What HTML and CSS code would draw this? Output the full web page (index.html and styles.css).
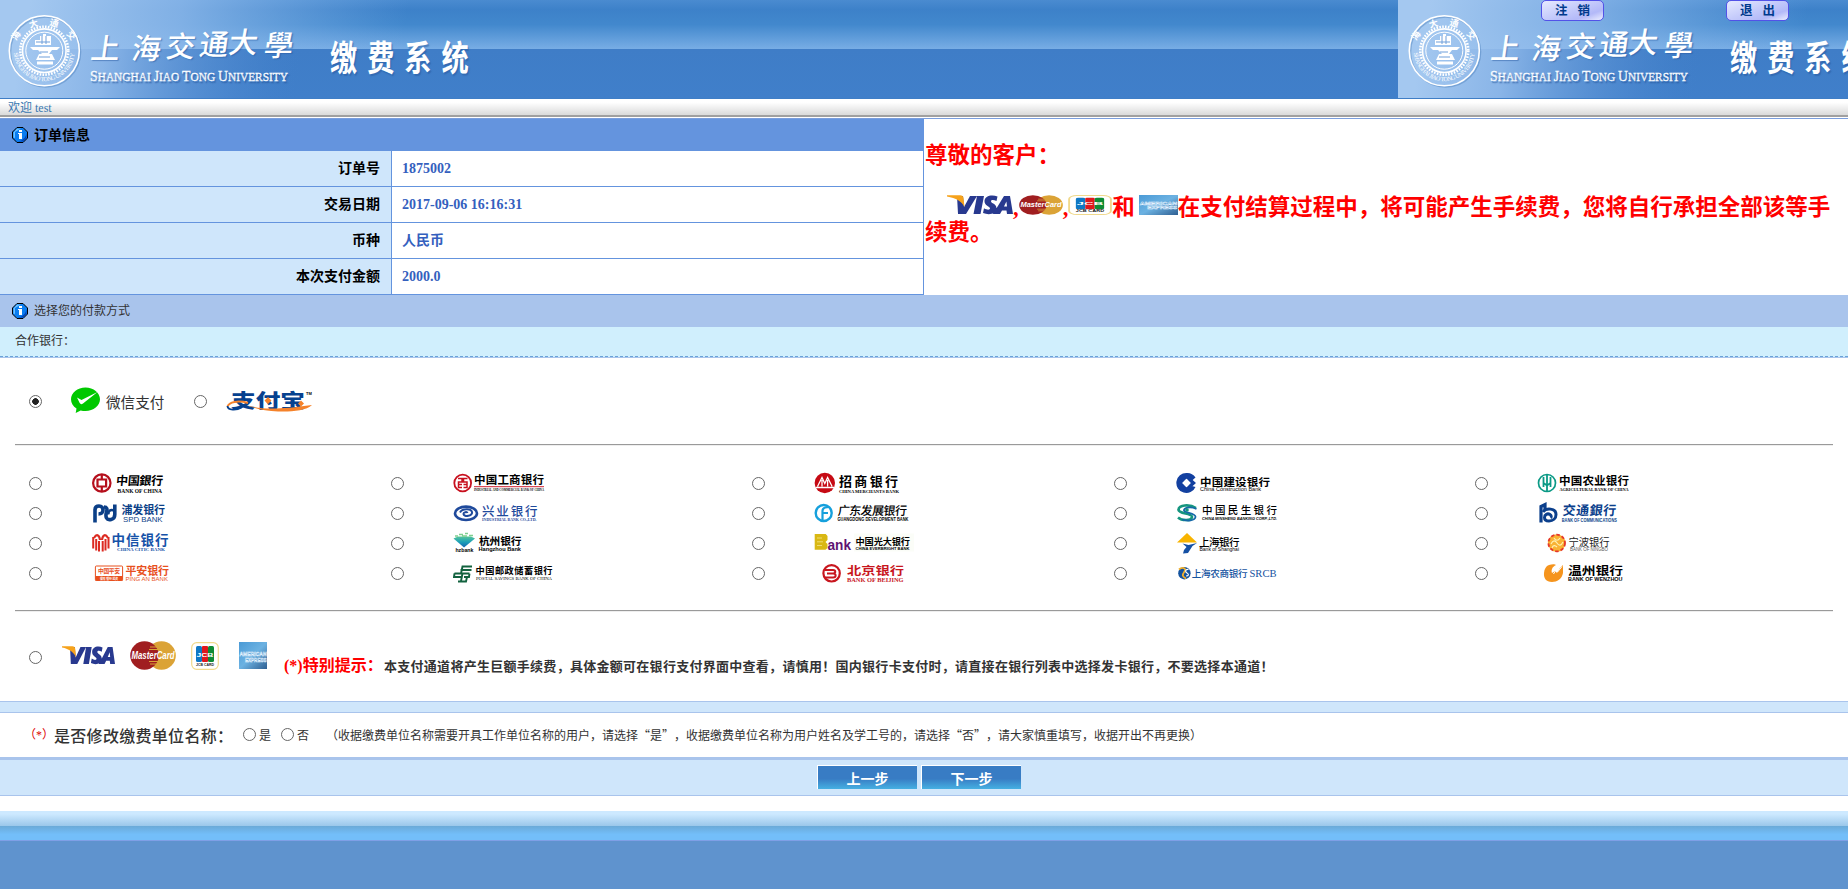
FILE: index.html
```html
<!DOCTYPE html>
<html lang="zh-CN">
<head>
<meta charset="utf-8">
<title>缴费系统</title>
<link rel="stylesheet" href="styles.css">
</head>
<body>
<svg class="defs" width="0" height="0" aria-hidden="true">
  <defs>
    <linearGradient id="gTop" x1="0" y1="0" x2="0" y2="1">
      <stop offset="0" stop-color="#4a8bd0"/><stop offset=".2" stop-color="#3d81c9"/><stop offset=".5" stop-color="#4288cd"/><stop offset="1" stop-color="#78ade5"/>
    </linearGradient>
    <linearGradient id="gLow" x1="0" y1="0" x2="0" y2="1">
      <stop offset="0" stop-color="#3f7dc7"/><stop offset="1" stop-color="#407fca"/>
    </linearGradient>
    <linearGradient id="gLeft" gradientUnits="userSpaceOnUse" x1="30" y1="0" x2="400" y2="60">
      <stop offset="0" stop-color="#a4c8f0"/><stop offset=".4" stop-color="#8cb8ea" stop-opacity=".85"/><stop offset="1" stop-color="#78ade5" stop-opacity="0"/>
    </linearGradient>
    <linearGradient id="gLeftLow" gradientUnits="userSpaceOnUse" x1="20" y1="40" x2="300" y2="70">
      <stop offset="0" stop-color="#a4c8f0"/><stop offset=".3" stop-color="#92bbeb" stop-opacity=".9"/><stop offset="1" stop-color="#4583cd" stop-opacity="0"/>
    </linearGradient>
    <linearGradient id="gBlue" x1="0" y1="0" x2="1" y2="1">
      <stop offset="0" stop-color="#4a9ad6"/><stop offset=".5" stop-color="#6cb2e2"/><stop offset="1" stop-color="#2f5f92"/>
    </linearGradient>
    <linearGradient id="gHz" x1="0" y1="0" x2="0" y2="1">
      <stop offset="0" stop-color="#57c59a"/><stop offset=".5" stop-color="#1ba0b8"/><stop offset="1" stop-color="#1565b0"/>
    </linearGradient>

    <symbol id="banner" viewBox="0 0 1398 98">
      <rect width="1398" height="49" fill="url(#gTop)"/>
      <rect y="49" width="1398" height="49" fill="url(#gLow)"/>
      <rect width="420" height="49" fill="url(#gLeft)"/>
      <rect y="49" width="320" height="49" fill="url(#gLeftLow)"/>
      <circle cx="45.500" cy="52" r="35" fill="none" stroke="#3a6fae" stroke-width="1.600" opacity=".35"/>
      <circle cx="44.300" cy="50.700" r="35" fill="none" stroke="#fff" stroke-width="1.600"/>
      <circle cx="44.300" cy="50.700" r="24" fill="none" stroke="#fff" stroke-width="2.600" stroke-dasharray="1.600 1.300"/>
      <circle cx="44.300" cy="50.700" r="21.800" fill="none" stroke="#fff" stroke-width="1.600"/>
      <circle cx="44.300" cy="50.700" r="18.500" fill="none" stroke="#fff" stroke-width="1"/>
      <path fill="#fff" d="M35 40h5v-4h3v-2h3v2h5v9h-16zM30 47h30l-3 3h-5l-3 4h3l3 6H36l3-6h3l-4-4h-5zM37 61.500h16v3H37z"/>
      <path stroke="#6e9fda" stroke-width="1" fill="none" d="M36 42h14M42 36v8M46 36v8M40 52h8M39 57h11"/>
      <path id="arcLow" d="M13.800 50.700a30.500 30.500 0 0 0 61 0" fill="none"/>
      <text class="roman" font-size="6.200" fill="#fff"><textPath href="#arcLow" textLength="91" startOffset="2">SHANGHAI JIAO TONG UNIVERSITY</textPath></text>
      <g class="cn" font-size="9" fill="#fff">
        <text transform="translate(16 41) rotate(-55)">海</text><text transform="translate(30 28) rotate(-15)">大</text><text transform="translate(49 25) rotate(15)">通</text><text transform="translate(66 34) rotate(50)">交</text>
      </g>
      <text class="brush shade" x="98 139 173 206 235 271" y="59 59 57 55 53 56" font-size="29" fill="#fff" transform="skewX(-8)">上海交通大學</text>
      <text class="roman shade" x="90" y="81" fill="#fff" stroke="#fff" stroke-width=".3" textLength="198" lengthAdjust="spacingAndGlyphs"><tspan font-size="14.500">S</tspan><tspan font-size="12">HANGHAI </tspan><tspan font-size="14.500">J</tspan><tspan font-size="12">IAO </tspan><tspan font-size="14.500">T</tspan><tspan font-size="12">ONG </tspan><tspan font-size="14.500">U</tspan><tspan font-size="12">NIVERSITY</tspan></text>
      <text class="sys shade" transform="translate(330 71) scale(.8 1.05)" font-size="34" letter-spacing="12.500" fill="#fff">缴费系统</text>
    </symbol>

    <symbol id="info" viewBox="0 0 16 16">
      <path d="M5 .5h6L15.500 5v6L11 15.500H5L.500 11V5z" fill="#0a7df0" stroke="#000"/>
      <path d="M5 1.500h4L3 5v6L1.500 10.500v-5z" fill="#6ec4ff"/>
      <path d="M14.500 6v5L11 14.500H6c5-1 8-4 8.500-8.500z" fill="#0443b8"/>
      <path d="M7 3h3v2H7zM6 6h4v6H7V7H6z" fill="#fff"/>
    </symbol>

    <symbol id="visa" viewBox="0 0 66 20" preserveAspectRatio="none">
      <path fill="#28398f" d="M10 1h6l1 11 6-11h7L19 19h-8zM30 1h7l-3.500 18h-7zM53 19h-7L57 1h6l3 18h-6l-.5-3.500h-4.500zM57 11.500h3l-.6-5zM50.500 1.500l-1 4.500c-3-1.500-5.500-1.300-5.500.2 0 2.300 5.500 2.300 5.500 7 0 5.800-7.500 7.300-13.500 4.800l1-4.800c3 2 6 1.800 6 .3 0-2.300-5.500-2.500-5.500-7.200C37.500 1 44.500-.8 50.500 1.500z"/>
      <path fill="#f6a21b" d="M0 .300h13c2 0 3.500 1 3.500 3L17.500 12C15 6.500 9 3 0 1.500z"/>
    </symbol>
    <symbol id="mc" viewBox="0 0 46 29" preserveAspectRatio="none">
      <ellipse cx="31.500" cy="14.500" rx="14.300" ry="14.300" fill="#dba336"/>
      <ellipse cx="14.500" cy="14.500" rx="14.300" ry="14.300" fill="#a01e20"/>
      <path stroke="#dba336" stroke-width="1.200" d="M20 6h7M19 8.500h9M19 20.500h9M20 23h7"/>
      <text class="sans" x="1.500" y="18" font-size="10" font-style="italic" font-weight="700" fill="#fff" textLength="43" lengthAdjust="spacingAndGlyphs">MasterCard</text>
    </symbol>
    <symbol id="jcb" viewBox="0 0 28 28" preserveAspectRatio="none">
      <rect x=".700" y=".700" width="26.600" height="26.600" rx="5" fill="#fff" stroke="#f0d98c" stroke-width="1.200"/>
      <rect x="5" y="4" width="6" height="16" rx="1.500" fill="#0f78c4"/><rect x="11" y="4" width="6" height="16" rx="1" fill="#e0161c"/><rect x="17" y="4" width="6" height="16" rx="1.500" fill="#0d8b34"/>
      <text class="sans" x="5.500" y="14.500" font-size="6" font-weight="700" fill="#fff" textLength="17" lengthAdjust="spacingAndGlyphs">JCB</text>
      <text class="sans" x="5" y="24" font-size="4" font-weight="700" fill="#222" textLength="18" lengthAdjust="spacingAndGlyphs">JCB CARD</text>
    </symbol>
    <symbol id="amex" viewBox="0 0 28 27" preserveAspectRatio="none">
      <rect width="28" height="27" fill="url(#gBlue)"/>
      <g class="sans" font-size="5.500" font-weight="700" fill="#3d86c0" stroke="#e4f3ff" stroke-width=".500">
        <text x=".500" y="14" textLength="27" lengthAdjust="spacingAndGlyphs">AMERICAN</text>
        <text x="6" y="19.500" textLength="21.500" lengthAdjust="spacingAndGlyphs">EXPRESS</text>
      </g>
    </symbol>
  </defs>
</svg>

<header class="top">
  <svg class="banner" width="1398" height="98"><use href="#banner"/></svg>
  <svg class="banner next" width="1398" height="98"><use href="#banner"/></svg>
  <button class="pill logout">注 销</button>
  <button class="pill quit">退 出</button>
</header>
<div class="welcome">欢迎 test</div>

<section class="order">
  <div class="order-info">
    <h2><svg width="16" height="16"><use href="#info"/></svg><span>订单信息</span></h2>
    <dl>
      <dt>订单号</dt><dd>1875002</dd>
      <dt>交易日期</dt><dd>2017-09-06 16:16:31</dd>
      <dt>币种</dt><dd>人民币</dd>
      <dt>本次支付金额</dt><dd>2000.0</dd>
    </dl>
  </div>
  <div class="notice">
    <p>尊敬的客户：</p>
    <p class="body"><svg width="66" height="20"><use href="#visa"/></svg>,<svg width="44" height="20"><use href="#mc"/></svg>,<svg width="44" height="20"><use href="#jcb"/></svg>和<svg class="amex" width="39" height="20"><use href="#amex"/></svg>在支付结算过程中，将可能产生手续费，您将自行承担全部该等手续费。</p>
  </div>
</section>

<div class="bar"><svg width="16" height="16"><use href="#info"/></svg>选择您的付款方式</div>
<div class="partner">合作银行：</div>

<main>
  <div class="wallets">
    <input type="radio" name="pay" checked>
    <svg class="wechat" width="96" height="28" viewBox="0 0 96 28">
      <path fill="#00c800" d="M14.500.5C6.500.5 0 5.700 0 12.300c0 3.900 2.100 7.200 5.500 9.300L4.700 26l5-2.600c1.500.4 3.100.6 4.800.6 8 0 14.500-5.200 14.500-11.700S22.500.5 14.500.5z"/>
      <path fill="#fff" d="M6 10.500l4.500 2.500L26.500 5 12 16.500c-1.500 1-2.600.8-3.300-.5z"/>
      <text class="cn thin" x="35" y="21" font-size="14.600" fill="#333">微信支付</text>
    </svg>
    <input type="radio" name="pay">
    <svg class="alipay" width="88" height="28" viewBox="0 -3 88 28">
      <text class="cn heavy" x="5" y="17" font-size="19" fill="#06418f" textLength="74" lengthAdjust="spacingAndGlyphs">支付宝</text>
      <path fill="none" stroke="#f5822a" stroke-width="2" d="M22 12C12 9 3 11 1.500 15.500"/>
      <path fill="none" stroke="#06418f" stroke-width="1.800" d="M1.500 15c0 4.500 9 4.500 14 1.500"/>
      <path fill="#f5822a" d="M18 13c12 5 30 6.500 68 1-6 6-22 7-34 6.500-14-.5-24-3-34-7.500zM42 6l3.500 3.500L42 13l-3.500-3.500zM75 9.500l3 3-3 3-3-3z"/>
      <text class="sans" x="80" y="3.500" font-size="4" font-weight="700">TM</text>
    </svg>
  </div>
  <hr>
  <div class="banks">
    <label><input type="radio" name="pay"><svg width="110" height="24">
      <circle cx="10.800" cy="12" r="8.700" fill="none" stroke="#b50f1c" stroke-width="2.200"/><path d="M10.800 3v5M10.800 16v5M6.500 8.500h8.600v7H6.500z" fill="none" stroke="#b50f1c" stroke-width="2.200"/>
      <text class="brush bold" x="25" y="14" font-size="12" textLength="47" transform="skewX(-5) translate(1 0)">中国銀行</text><text class="en" x="26.500" y="21.800" textLength="44.500" lengthAdjust="spacingAndGlyphs">BANK OF CHINA</text></svg></label>
    <label><input type="radio" name="pay"><svg width="110" height="24">
      <circle cx="9.700" cy="12" r="8.400" fill="none" stroke="#c8101e" stroke-width="1.800"/><path d="M5 7.500h4v3.500H5.500v5.500H9M14.500 7.500h-4v3.500h3.500v5.500h-3.500M5 13.500h4M10.500 13.500h4" fill="none" stroke="#c8101e" stroke-width="1.500"/>
      <text class="cn" x="21" y="13" font-size="11.500" textLength="70">中国工商银行</text><path d="M21 15.700h70" stroke="#d02030"/><text class="en" x="21" y="20.300" font-size="4" textLength="70" lengthAdjust="spacingAndGlyphs">INDUSTRIAL AND COMMERCIAL BANK OF CHINA</text></svg></label>
    <label><input type="radio" name="pay"><svg width="110" height="24">
      <circle cx="10.800" cy="12" r="10.200" fill="#c60a14"/><path d="M3.500 15.500l4.500-9 2.800 6 2.800-6 4.500 9M8 15.500V9M13.600 15.500V9M1.500 16.500h18.500" fill="none" stroke="#fff" stroke-width="1.300"/>
      <text class="cn" x="25" y="15" font-size="13" textLength="59">招商银行</text><text class="en" x="25" y="21.500" font-size="5" textLength="60" lengthAdjust="spacingAndGlyphs">CHINA MERCHANTS BANK</text></svg></label>
    <label><input type="radio" name="pay"><svg width="110" height="24">
      <path fill="#1340a0" d="M10.500 2a10 10 0 1 0 9 14l-3.500-1-5.500 4L3.500 12l7-6.500 5 4.500 4-3.500A10 10 0 0 0 10.500 2z"/><path fill="#1340a0" fill-rule="evenodd" d="M10.500 3.500L20 12l-9.500 8.500L2.500 12zM10.500 7.800L6.300 12l4.200 4.200 4.200-4.200z"/><path fill="#fff" d="M10.500 7.800l4.200 4.200-4.200 4.200L6.300 12z"/>
      <text class="cn" x="24" y="14.500" font-size="11.500" textLength="70" transform="translate(0 2) scale(1 .88)">中国建设银行</text><text class="en sans reg" x="24" y="19.500" font-size="4.800" textLength="61" lengthAdjust="spacingAndGlyphs">China Construction Bank</text></svg></label>
    <label><input type="radio" name="pay"><svg width="110" height="24">
      <circle cx="10" cy="12" r="8.500" fill="none" stroke="#0b9a86" stroke-width="1.700"/><path d="M10 3.500v17M6.500 6v6l3.500 2.500 3.500-2.500V6M6.500 10v6M13.500 10v6" fill="none" stroke="#0b9a86" stroke-width="1.800"/>
      <text class="cn" x="22" y="13.500" font-size="11.500" textLength="70">中国农业银行</text><text class="en" x="22.500" y="20" font-size="4.800" textLength="69" lengthAdjust="spacingAndGlyphs">AGRICULTURAL BANK OF CHINA</text></svg></label>

    <label><input type="radio" name="pay"><svg width="110" height="24" fill="#0b3f87">
      <path fill="none" stroke="#0b3f87" stroke-width="3.600" d="M4 21.500V9c0-3 1.500-4 4-4 2.800 0 4 1.700 4 4 0 2.600-1.500 4-4.500 4"/><path fill="none" stroke="#0b3f87" stroke-width="3.600" d="M13 6c3 0 3.500 2 2.500 5-.8 2.800-1 4 0 6 1.300 2.500 8.300 2.500 8.300-3.500V3.500"/><path fill="none" stroke="#0b3f87" stroke-width="2.500" d="M23 9.500c-4-1.500-6 1-5.500 4"/>
      <text class="cn" x="30.500" y="13" font-size="11" textLength="43.500">浦发银行</text><text class="en sans reg" x="32" y="21.300" font-size="7.800" textLength="39.500" lengthAdjust="spacingAndGlyphs">SPD BANK</text></svg></label>
    <label><input type="radio" name="pay"><svg width="110" height="24" fill="#1f4a9c">
      <ellipse cx="13" cy="12.300" rx="11" ry="6.700" fill="none" stroke="#1f4a9c" stroke-width="2.600"/><path d="M7 11.500c2-4 11-4.500 12-.5 1 4-8 5.500-8.500 2-.2-2 3.500-2.500 4-1" fill="none" stroke="#1f4a9c" stroke-width="2"/>
      <text class="brush" x="29" y="14.500" font-size="12.500" textLength="55.500">兴业银行</text><text class="en" x="29" y="20.300" font-size="4.800" textLength="54.500" lengthAdjust="spacingAndGlyphs">INDUSTRIAL BANK CO.,LTD.</text></svg></label>
    <label><input type="radio" name="pay"><svg width="110" height="24">
      <circle cx="9.700" cy="12" r="8" fill="none" stroke="#16a0dc" stroke-width="2.400"/><path d="M8.500 21V10c0-3 2-4 6.500-4M8.500 12H14" fill="none" stroke="#16a0dc" stroke-width="2.200"/>
      <text class="brush" x="23.500" y="14.500" font-size="12" textLength="69" transform="skewX(-6) translate(1.500 0)">广东发展银行</text><text class="en sans" x="23.500" y="19.900" font-size="4.600" textLength="71" lengthAdjust="spacingAndGlyphs">GUANGDONG DEVELOPMENT BANK</text></svg></label>
    <label><input type="radio" name="pay"><svg width="110" height="24">
      <path d="M20 7C14 3 2 3.500 2.500 9c.5 4 14 3 13.500 7-.5 4-10 4-14 .5" fill="none" stroke="#16967f" stroke-width="2.600"/><path d="M20.500 8C14 5 7.500 7 8 9.500c.5 2.500 12 2.500 11.500 6.500-.5 3.500-8 4.500-13.500 2.500" fill="none" stroke="#1569a8" stroke-width="1.800"/><circle cx="11" cy="9" r="1.800" fill="#16967f"/>
      <text class="brush" x="26" y="13.300" font-size="10.500" textLength="75">中国民生银行</text><text class="en sans" x="26" y="19.200" font-size="4.200" font-style="italic" textLength="75" lengthAdjust="spacingAndGlyphs">CHINA MINSHENG BANKING CORP.,LTD.</text></svg></label>
    <label><input type="radio" name="pay"><svg width="110" height="24">
      <path fill="none" stroke="#0b3f8c" stroke-width="3.200" d="M4 21.500V5.500l4-2V9"/><path fill="none" stroke="#0b3f8c" stroke-width="3" d="M6 11c3-4.500 13-4 13 2.500 0 4-3 6.500-7 6.500-3 0-4.500-1.500-4.500-3.500 0-3 3-4.500 5.500-3 1.500 1 1.500 2.500.5 3.200"/>
      <text class="brush bold" fill="#0b3f8c" x="25.500" y="13.800" font-size="13" textLength="53.500" transform="skewX(-5) translate(1 0)">交通銀行</text><text class="en sans" fill="#0b3f8c" x="24.800" y="21.300" font-size="4.500" textLength="55" lengthAdjust="spacingAndGlyphs">BANK OF COMMUNICATIONS</text></svg></label>

    <label><input type="radio" name="pay"><svg width="110" height="24">
      <path d="M2.200 6v11.500M5.200 8v11.500M8 10v10.500M11.700 10v10.500M14.500 8v11.500M17.500 6v11.500" stroke="#dc2b22" stroke-width="2" fill="none"/><path d="M3 7C6 2 8.500 4.500 9 9M17 7c-3-5-5.500-2.500-6 2" stroke="#dc2b22" stroke-width="2.200" fill="none"/>
      <text class="brush bold" x="20.500" y="13.500" font-size="13.500" fill="#1552a8" textLength="57">中信银行</text><text class="en" x="26" y="20.300" font-size="5" fill="#1552a8" textLength="48" lengthAdjust="spacingAndGlyphs">CHINA CITIC BANK</text></svg></label>
    <label><input type="radio" name="pay"><svg width="110" height="24">
      <path fill="url(#gHz)" d="M.5 7.500L5 5.500h13l4 2-11 9z"/><path d="M2 5h3M6 3.500h4M12 2.500h3M16 4.500h4M9 5h5" stroke="#7fcf8f" stroke-width="1.400"/>
      <text class="en sans" x="2.400" y="21.300" font-size="5" textLength="18" lengthAdjust="spacingAndGlyphs">hzbank</text><text class="cn" x="26" y="14" font-size="10.700" textLength="42.500">杭州银行</text><text class="en sans" x="25.500" y="20" font-size="5" textLength="42.500" lengthAdjust="spacingAndGlyphs">Hangzhou Bank</text></svg></label>
    <label><input type="radio" name="pay"><svg width="110" height="24">
      <rect x="40" y="2.500" width="60" height="18" fill="#fbfdf8"/><path fill="#d9b814" d="M.7 3h11l1.800 2v4L11.500 11l2 2v4L11.500 18.700H.7z"/><path d="M3 7h5M3 14.500h5M3 10.800h6" stroke="#f0dc70" stroke-width="1"/>
      <text class="sans" x="13.500" y="18.500" font-size="14.500" font-weight="700" fill="#5e1472" textLength="23.500" lengthAdjust="spacingAndGlyphs">ank</text><text class="cn" x="41.500" y="13.500" font-size="9.200" textLength="54.500">中国光大银行</text><text class="en sans" x="41.500" y="19.200" font-size="4.300" textLength="54" lengthAdjust="spacingAndGlyphs">CHINA EVERBRIGHT BANK</text></svg></label>
    <label><input type="radio" name="pay"><svg width="110" height="24">
      <path fill="#f8b400" d="M11 2l10 9.500H1z"/><path fill="#1550a4" d="M6.500 12.500l6 1.500 8.500-2-4.500 3-4.500 7-5 .5 1-3.500 2.500-3z"/>
      <text class="cn semi" x="23" y="14.500" font-size="10.500" textLength="40.500">上海银行</text><text class="en sans reg" x="23.500" y="19.700" font-size="5" textLength="39.500" lengthAdjust="spacingAndGlyphs">Bank of Shanghai</text></svg></label>
    <label><input type="radio" name="pay"><svg width="110" height="24">
      <circle cx="19.700" cy="12" r="8.800" fill="#f9b233"/><circle cx="19.700" cy="12" r="8.300" fill="none" stroke="#e5372b" stroke-width="1.800" stroke-dasharray="3.500 2"/><path d="M14 13c2-4 4-4 6-1s4 3 6-1M15 17c1-3 3-3 5-1M17 7c2 3 4 3 6 0" fill="none" stroke="#fff0b0" stroke-width="1.200"/>
      <text class="cn thin" x="31.500" y="14.500" font-size="10.300" fill="#222" textLength="41">宁波银行</text><text class="en sans reg" x="33" y="19.500" font-size="4.600" fill="#555" textLength="38" lengthAdjust="spacingAndGlyphs">BANK OF NINGBO</text></svg></label>

    <label><input type="radio" name="pay"><svg width="110" height="24" fill="#e8501e">
      <rect x="4.400" y="5" width="27.200" height="14.500" rx="1" fill="#fff" stroke="#e8501e"/><rect x="4.400" y="15" width="27.200" height="4.800"/><text class="cn" x="7" y="12.300" font-size="5.800" textLength="22">中国平安</text><text class="cn" x="9" y="18.700" font-size="3.400" fill="#fff" textLength="18" lengthAdjust="spacingAndGlyphs">保险 银行 投资</text>
      <text class="cn" x="34.500" y="13.700" font-size="11" textLength="43.500">平安银行</text><text class="en sans reg" x="34.500" y="19.900" font-size="6" textLength="42.500" lengthAdjust="spacingAndGlyphs">PING AN BANK</text></svg></label>
    <label><input type="radio" name="pay"><svg width="110" height="24">
      <path d="M19 5.500H9.500L8 12.500M18.500 9h-11M1.500 12.500h15M1.500 12.500L1 16h8M16.500 12.500L16 16h-5M5 20.500h8L14 16M9.500 12.500L8 20" stroke="#12623f" stroke-width="1.900" fill="none"/>
      <text class="brush bold" x="22.500" y="13" font-size="9.200" textLength="77">中国邮政储蓄银行</text><text class="en reg" x="23" y="19.300" font-size="4.300" textLength="76" lengthAdjust="spacingAndGlyphs">POSTAL SAVINGS BANK OF CHINA</text></svg></label>
    <label><input type="radio" name="pay"><svg width="110" height="24" fill="#c8161e">
      <circle cx="17.600" cy="12.300" r="8.200" fill="none" stroke="#c8161e" stroke-width="2.200"/><path d="M11 9h8c3 0 3 3.500 0 3.500h-4.500M13 12.500h6c3.500 0 3.500 4 0 4h-8" fill="none" stroke="#c8161e" stroke-width="2"/>
      <text class="cn" x="33" y="14" font-size="11.500" textLength="57" lengthAdjust="spacingAndGlyphs">北京银行</text><text class="en" x="33" y="21.300" font-size="6.500" textLength="56.500" lengthAdjust="spacingAndGlyphs">BANK OF BEIJING</text></svg></label>
    <label><input type="radio" name="pay"><svg width="110" height="24" fill="#14539f">
      <circle cx="8.400" cy="12.200" r="6.200"/><path d="M3 8.500C6 5.500 11 7 8.500 10.500S6 15.500 10 17.500" fill="none" stroke="#f0b030" stroke-width="1.800"/><path d="M12.500 8.500C9 8 9 11 11 12s2 3-1 3" fill="none" stroke="#fff" stroke-width="1.200"/>
      <text class="cn semi" x="15.700" y="16" font-size="9.600" textLength="56">上海农商银行</text><text class="roman" x="73.500" y="16" font-size="11" textLength="27" lengthAdjust="spacingAndGlyphs">SRCB</text></svg></label>
    <label><input type="radio" name="pay"><svg width="110" height="24">
      <path fill="#f5941d" d="M12 4c3-1 6-1 7 0-4 2-5 5-4 8l3-2 2 2 3-5 3-3v8c-1 6-6 9-11 9-6 0-8.500-4-8-9 .3-4 2-7 5-8z"/><path d="M16.500 13l3-5 1.500 2.500 4-5" fill="none" stroke="#fff" stroke-width="1"/>
      <text class="cn" x="31" y="14" font-size="11.500" textLength="55" lengthAdjust="spacingAndGlyphs">温州银行</text><text class="en sans" x="31" y="20.300" font-size="5.600" textLength="54.500" lengthAdjust="spacingAndGlyphs">BANK OF WENZHOU</text></svg></label>
  </div>
  <hr>
  <div class="cards">
    <input type="radio" name="pay">
    <svg class="c-visa" width="53" height="19"><use href="#visa"/></svg>
    <svg class="c-mc" width="46" height="29"><use href="#mc"/></svg>
    <svg class="c-jcb" width="28" height="28"><use href="#jcb"/></svg>
    <svg class="c-amex" width="28" height="27"><use href="#amex"/></svg>
    <p><span class="red">(*)特别提示：</span><b>本支付通道将产生巨额手续费，具体金额可在银行支付界面中查看，请慎用！国内银行卡支付时，请直接在银行列表中选择发卡银行，不要选择本通道！</b></p>
  </div>
</main>

<div class="strip"></div>
<div class="rename">
  <span class="star">（<i>*</i>）</span><strong>是否修改缴费单位名称：</strong>
  <label><input type="radio" name="rename">是</label>
  <label class="no"><input type="radio" name="rename">否</label>
  <span class="hint">（收据缴费单位名称需要开具工作单位名称的用户，请选择<span class="q open">“</span>是<span class="q">”</span>，收据缴费单位名称为用户姓名及学工号的，请选择<span class="q open">“</span>否<span class="q">”</span>，请大家慎重填写，收据开出不再更换）</span>
</div>
<div class="actions"><button>上一步</button><button>下一步</button></div>
<footer><div class="f1"></div><div class="f2"></div><div class="f3"></div></footer>
</body>
</html>
```
FILE: styles.css
```css
* { box-sizing: border-box; }
body { margin: 0; width: 1848px; height: 890px; overflow: hidden; background: #fff; color: #333; font: 12px/16px "Liberation Serif", "Noto Sans CJK SC", sans-serif; }
h2, p, dl, dd { margin: 0; }
svg { display: block; flex: none; }
.defs { position: absolute; }

.cn { font-family: "Noto Sans CJK SC", sans-serif; font-weight: 700; }
.cn.thin { font-weight: 400; }
.cn.semi { font-weight: 500; }
.cn.heavy { font-weight: 900; }
.brush { font-family: "Noto Sans CJK TC", "Noto Sans CJK SC", sans-serif; font-weight: 500; }
.brush.bold { font-weight: 700; }
.sys { font-family: "Noto Sans CJK SC", sans-serif; font-weight: 700; }
.shade { text-shadow: 1.5px 1.5px 1px rgba(40, 90, 160, .5); }
.roman { font-family: "Liberation Serif", serif; }
.sans { font-family: "Liberation Sans", sans-serif; }
.en { font-family: "Liberation Serif", serif; font-weight: 700; }
.en:not([font-size]) { font-size: 5.8px; }
.en.sans { font-family: "Liberation Sans", sans-serif; }
.en.reg { font-weight: 400; }

.top { position: relative; display: flex; height: 99px; overflow: hidden; background: #a4c8f0; border-bottom: 1px solid #3f7ec6; }
.banner.next { margin-left: 2px; }
.pill { position: absolute; top: 0; width: 63px; height: 21px; padding: 0 0 2px; border: 1px solid #5252e8; border-radius: 5px; background: linear-gradient(160deg, #e6eaff 0, #c6ccfb 45%, #b3b9f8 75%, #eceeff 100%); color: #003a8c; font: 700 12.5px/16px "Noto Sans CJK SC", sans-serif; word-spacing: 7px; }
.logout { left: 1541px; }
.quit { left: 1726px; }
.welcome { height: 19px; padding: 1px 0 0 8px; background: linear-gradient(#fff 20%, #dcdcdc 90%) 0 0 / 100% 17px no-repeat #fff; box-shadow: inset 0 -1px #fff, inset 0 -3px #a0a0a0; color: #3a78b0; }

.order { display: flex; border-top: 1px solid #7a9ede; height: 177px; }
.order-info { width: 924px; }
.order h2 { display: flex; align-items: center; gap: 6px; height: 32px; padding-left: 12px; background: #6494de; color: #000; font: 700 14px "Noto Sans CJK SC", sans-serif; }
.order h2 span { padding-bottom: 2px; }
dl { display: grid; grid-template-columns: 392px 532px; font-size: 14px; font-weight: 700; line-height: 35px; }
dt, dd { height: 36px; border-right: 1px solid #6494de; border-bottom: 1px solid #6494de; }
dt { padding-right: 11px; background: #cfe6fb; color: #000; text-align: right; }
dd { padding-left: 10px; color: #3460be; }
.notice { flex: 1; padding: 24px 0 0 1px; color: #f00; font-size: 22.5px; font-weight: 700; line-height: 25px; }
.notice .body { margin-top: 27px; text-indent: 22px; }
.notice .body svg { display: inline-block; vertical-align: 0; }
.notice .amex { margin-left: 4px; }

.bar { display: flex; align-items: center; gap: 6px; height: 32px; padding-left: 12px; background: #a9c4ec; }
.partner { height: 31px; padding: 6px 0 0 15px; border-bottom: 1px solid #a9c4ec; background: repeating-linear-gradient(90deg, #6aa3d8 0 3px, #d0effd 3px 5px) 0 100% / 100% 1px no-repeat #d0effd; }

input { appearance: none; flex: none; width: 13px; height: 13px; margin: 0; border: 1px solid #666; border-radius: 50%; background: #fff; }
input:checked { background: radial-gradient(circle, #222 0 3px, #fff 3.6px); }

main { height: 343px; padding: 0 15px; }
hr { height: 2px; margin: 0; border: 0; border-top: 1px solid #9a9a9a; background: #eee; }
.wallets { display: flex; align-items: center; height: 86px; padding: 1px 0 0 14px; }
.wechat { margin: 0 27px 2px 29px; }
.alipay { margin-left: 19px; }
.banks { display: grid; grid-template-columns: repeat(5, 361.6px); grid-auto-rows: 30px; height: 164px; padding-top: 22px; }
.banks label { display: flex; align-items: center; padding-left: 14px; }
.banks input { margin-right: 49px; }
.cards { display: flex; align-items: center; height: 91px; padding-left: 14px; }
.cards svg { margin-bottom: 4px; }
.c-visa { margin-left: 20px; }
.c-mc { margin-left: 15px; }
.c-jcb { margin-left: 15px; }
.c-amex { margin-left: 20px; }
.cards p { display: flex; align-items: baseline; margin: 16px 0 0 17px; white-space: nowrap; }
.cards .red { width: 100px; color: #f00; font-size: 16px; font-weight: 700; }
.cards b { font: 700 13px "Noto Sans CJK SC", sans-serif; letter-spacing: .28px; }

.strip { height: 12px; background: #cfe6fb; border: solid #a9c4ec; border-width: 1px 0; }
.rename { display: flex; align-items: center; height: 47px; padding: 0 0 1px 24px; border-bottom: 3px solid #a9c4ec; white-space: nowrap; font-family: "Noto Sans CJK SC", sans-serif; }
.star { width: 30px; color: #d00; }
.star i { font: 12px "Liberation Serif", serif; }
.rename strong { width: 189px; font-size: 16px; font-weight: 500; letter-spacing: .3px; }
.rename label { display: flex; align-items: center; gap: 3px; }
.rename .no { margin-left: 10px; }
.hint { margin-left: 17px; }
.q { display: inline-block; width: 12px; }
.q.open { text-align: right; }
.actions { display: flex; justify-content: center; gap: 4px; height: 36px; padding: 5px 10px 0 0; background: #cfe6fb; border-bottom: 1px solid #a9c4ec; }
.actions button { width: 100px; height: 24px; padding: 0; border: solid #fff; border-width: 1px 0 0 1px; background: linear-gradient(#387cc4 55%, #46b0e2); color: #fff; font: 700 14px/20px "Noto Sans CJK SC", sans-serif; }
footer { margin-top: 15px; }
.f1 { height: 15px; background: linear-gradient(#cde9ff 20%, #9ac7ea); }
.f2 { height: 15px; background: linear-gradient(#6aaad8, #73bef9 60%); border-bottom: 1px solid #7f9fe6; }
.f3 { height: 48px; background: #5f93ce; }
```
